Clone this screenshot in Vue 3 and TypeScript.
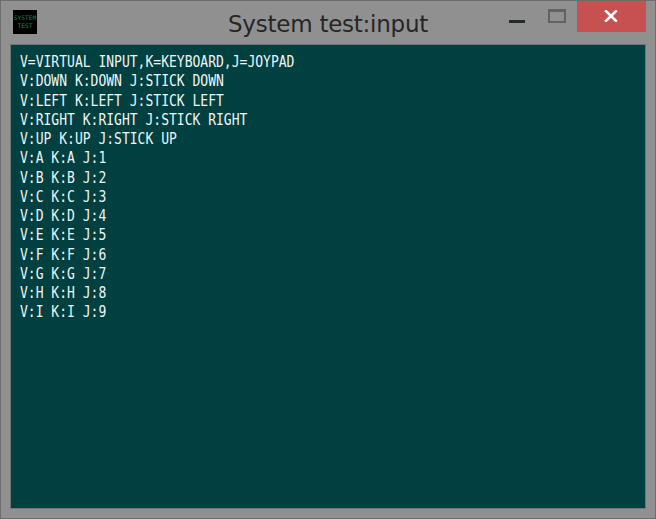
<script setup lang="ts">
const lines: string[] = [
  'V=VIRTUAL INPUT,K=KEYBOARD,J=JOYPAD',
  'V:DOWN K:DOWN J:STICK DOWN',
  'V:LEFT K:LEFT J:STICK LEFT',
  'V:RIGHT K:RIGHT J:STICK RIGHT',
  'V:UP K:UP J:STICK UP',
  ...'ABCDEFGHI'.split('').map((key, index) => `V:${key} K:${key} J:${index + 1}`),
]
</script>

<template>
  <main class="window">
    <header class="titlebar">
      <div class="app-icon"><span>SYSTEM</span><span>TEST</span></div>
      <h1 class="title">System test:input</h1>
      <div class="controls">
        <button class="minimize" aria-label="Minimize">
          <svg width="16" height="3" shape-rendering="crispEdges"><path d="M0 0H16V3H0Z" fill="#252a29" /></svg>
        </button>
        <button class="maximize" aria-label="Maximize">
          <svg width="18" height="14" shape-rendering="crispEdges"><path d="M0 0H18V14H0ZM2 3V12H16V3Z" fill="#626262" fill-rule="evenodd" /></svg>
        </button>
        <button class="close" aria-label="Close">
          <svg width="14" height="12"><path d="M1.2 .3L12.8 11.7M12.8 .3L1.2 11.7" stroke="#fff" stroke-width="2.6" /></svg>
        </button>
      </div>
    </header>
    <section class="screen">
      <div class="lines">
        <p v-for="line in lines" :key="line">{{ line }}</p>
      </div>
    </section>
  </main>
</template>

<style>
body {
  margin: 0;
  overflow: hidden;
}
</style>

<style scoped>
.window {
  box-sizing: border-box;
  width: 656px;
  height: 519px;
  display: flex;
  flex-direction: column;
  padding: 0 9px 9px;
  border: 1px solid #6c6c6c;
  background: #909090;
}
.titlebar {
  height: 43px;
  flex: none;
  display: grid;
  grid-template-columns: 218px 1fr auto;
}
.app-icon {
  width: 24px;
  height: 24px;
  margin: 9px 0 0 3px;
  display: flex;
  flex-direction: column;
  align-items: center;
  justify-content: center;
  overflow: hidden;
  background: #000;
  color: #2a8050;
  font: 6.2px/8px "DejaVu Sans Mono", monospace;
}
.title {
  margin: 8px 0 0;
  color: #262626;
  font: 400 23px/30px "DejaVu Sans", sans-serif;
  letter-spacing: -0.24px;
  white-space: nowrap;
}
.controls {
  display: flex;
  align-items: flex-start;
}
.controls button {
  padding: 0;
  border: 0;
  background: none;
}
.controls svg {
  display: block;
}
.controls .minimize {
  margin: 19px 23px 0 0;
}
.controls .maximize {
  margin: 8px 11px 0 0;
}
.controls .close {
  width: 69px;
  height: 31px;
  padding-left: 27px;
  background: #c75050;
}
.controls .close svg {
  position: relative;
  top: -1px;
}
.screen {
  box-sizing: border-box;
  flex: 1;
  border: 1px solid #737575;
  padding: 7px 9px;
  background: #004040;
}
.lines {
  width: max-content;
  transform: scaleX(0.814);
  transform-origin: left top;
}
.lines p {
  height: 19.26px;
  margin: 0;
  color: #f0f6f6;
  font: 16px/19.26px "DejaVu Sans Mono", monospace;
  white-space: pre;
}
</style>
